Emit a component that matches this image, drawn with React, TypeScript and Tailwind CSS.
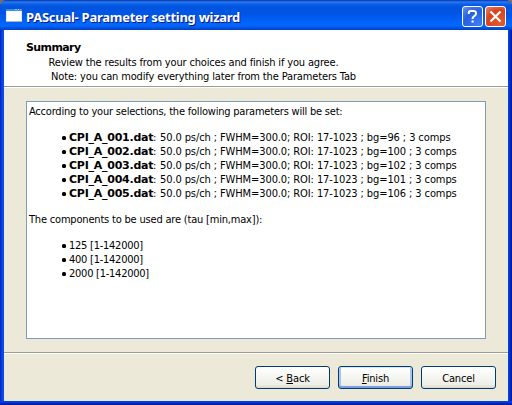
import React from 'react';

const files = [
  { name: 'CPI_A_001.dat', bg: 96 },
  { name: 'CPI_A_002.dat', bg: 100 },
  { name: 'CPI_A_003.dat', bg: 102 },
  { name: 'CPI_A_004.dat', bg: 101 },
  { name: 'CPI_A_005.dat', bg: 106 },
];

const components = ['125 [1-142000]', '400 [1-142000]', '2000 [1-142000]'];

function Bullet() {
  return <span className="mb-px mr-[3px] h-1 w-1 shrink-0 rounded-[1.5px] bg-black" />;
}

function WindowIcon() {
  return (
    <svg width="16" height="13" viewBox="0 0 16 13" shapeRendering="crispEdges">
      <rect width="16" height="13" fill="#e4edf8" />
      <rect width="16" height="2" fill="#3b91df" />
      <rect x="9" width="2" height="1" fill="#8ec9f3" />
      <rect x="12" width="1" height="1" fill="#b9dcf6" />
      <rect x="14" width="1" height="1" fill="#e07855" />
      <rect x="1" y="2" width="14" height="10" fill="#fff" />
      <rect y="12" width="16" height="1" fill="#b4b4ae" />
    </svg>
  );
}

function TitleBar() {
  return (
    <header className="flex h-[30px] shrink-0 items-start bg-[linear-gradient(180deg,#0831a8_0px,#2b7cf0_2px,#0b60ea_4px,#0054dd_7px,#0055e5_14px,#0063fa_22px,#0366fd_26px,#0051dd_28px,#0040c4_30px)] pl-1.5 pr-[6px]">
      <div className="mt-[9px]"><WindowIcon /></div>
      <h1 className="ml-1 mt-2 whitespace-nowrap font-['Noto_Sans','Open_Sans',sans-serif] text-[13px] font-bold leading-[19px] tracking-[-0.26px] text-white [text-shadow:1px_1px_0_#0a1883]">PAScual- Parameter setting wizard</h1>
      <div className="ml-auto mt-[6px] flex gap-[2px]">
        <button className="h-[21px] w-[21px] rounded-[3px] border border-white bg-[radial-gradient(circle_at_80%_90%,#3d7cf5,#2860dd_60%,#6d95ee)]" aria-label="Help">
          <svg width="19" height="19" viewBox="0 0 19 19" fill="none" stroke="#fff" strokeWidth="2">
            <path d="M5.8 7V5.8Q5.8 4 7.8 4h2.8q2.4 0 2.4 2v.8q0 1.5-1.7 2.4Q9.5 10.2 9.5 12M8.5 14.5h2.2" />
          </svg>
        </button>
        <button className="h-[21px] w-[21px] rounded-[3px] border border-white bg-[radial-gradient(circle_at_75%_85%,#e55a2c,#d9431d_60%,#e8866c)]" aria-label="Close">
          <svg width="19" height="19" viewBox="0 0 19 19" stroke="#fff" strokeWidth="2.2">
            <path d="m4.5 4.5 10 10m0-10-10 10" />
          </svg>
        </button>
      </div>
    </header>
  );
}

const buttonClass =
  'h-[23px] w-[75px] rounded-[3px] border border-[#003c74] bg-[linear-gradient(180deg,#fff,#f5f5f1_50%,#eeede6_85%,#dcd8cc)] pt-px text-center leading-[21px] tracking-[-0.15px]';

export default function App() {
  return (
    <div className="h-[405px] w-[512px] overflow-hidden bg-[#776f68] font-['DejaVu_Sans_Condensed','DejaVu_Sans',sans-serif] text-[11px] leading-[14px] text-black [font-stretch:condensed]">
      <div className="flex h-full flex-col overflow-hidden rounded-t-[7px] bg-[#0831d9]">
        <TitleBar />
        <div className="flex min-h-0 flex-1 bg-[linear-gradient(90deg,#0015c4_0px,#0831d9_1px,#0048e8_2px,#0855dd_4px,#0855dd_508px,#0048f0_508px,#0030d0_510px,#00138c_512px)]">
          <div className="flex flex-1 bg-[linear-gradient(0deg,#00138c_0px,#0030d0_2px,#0048f0_4px,transparent_4px)] px-1 pb-1">
            <main className="flex flex-1 flex-col bg-[#ece9d8]">
              <section className="h-[56px] shrink-0 whitespace-nowrap bg-white pt-[11px]">
                <h2 className="pl-[22px] font-['DejaVu_Sans',sans-serif] text-[11px] font-bold leading-[14px] tracking-[-0.6px] [font-stretch:normal]">Summary</h2>
                <p className="pl-[44.5px] pt-px tracking-[-0.16px]">Review the results from your choices and finish if you agree.</p>
                <p className="pl-[47px] tracking-[-0.14px]">Note: you can modify everything later from the Parameters Tab</p>
              </section>
              <div className="h-[2px] shrink-0 border-b border-t border-b-white border-t-[#9d9c91]" />
              <section className="mx-[22px] mt-[13px] h-[238px] w-[460px] shrink-0 whitespace-nowrap border border-[#7f9db9] bg-white pl-[2px] pt-[3px]">
                <p className="tracking-[-0.21px]">According to your selections, the following parameters will be set:</p>
                <ul className="mt-3 pl-[33px]">
                  {files.map((file) => (
                    <li key={file.name} className="flex h-[14px] items-center">
                      <Bullet />
                      <b className="w-[84px] font-['DejaVu_Sans',sans-serif] tracking-[-0.25px] [font-stretch:normal]">{file.name}</b>
                      <span className="w-[7px]">:</span>
                      <span className="tracking-[-0.1px]">50.0 ps/ch ; FWHM=300.0; ROI: 17-1023 ; bg={file.bg} ; 3 comps</span>
                    </li>
                  ))}
                </ul>
                <p className="mt-3 tracking-[-0.19px]">The components to be used are (tau [min,max]):</p>
                <ul className="mt-3 pl-[33px]">
                  {components.map((item) => (
                    <li key={item} className="flex h-[14px] items-center">
                      <Bullet />
                      <span className="tracking-[-0.25px]">{item}</span>
                    </li>
                  ))}
                </ul>
              </section>
              <div className="mt-[13px] h-[2px] shrink-0 border-b border-t border-b-white border-t-[#9d9c91]" />
              <footer className="flex justify-end gap-2 pr-3 pt-3">
                <button className={buttonClass}>&lt; <u>B</u>ack</button>
                <button className={buttonClass + ' shadow-[inset_0_1px_0_#cee7ff,inset_0_-2px_0_#7f9de8,inset_2px_0_0_#a9c3f3,inset_-2px_0_0_#a9c3f3]'}><u>F</u>inish</button>
                <button className={buttonClass}>Cancel</button>
              </footer>
            </main>
          </div>
        </div>
      </div>
    </div>
  );
}
